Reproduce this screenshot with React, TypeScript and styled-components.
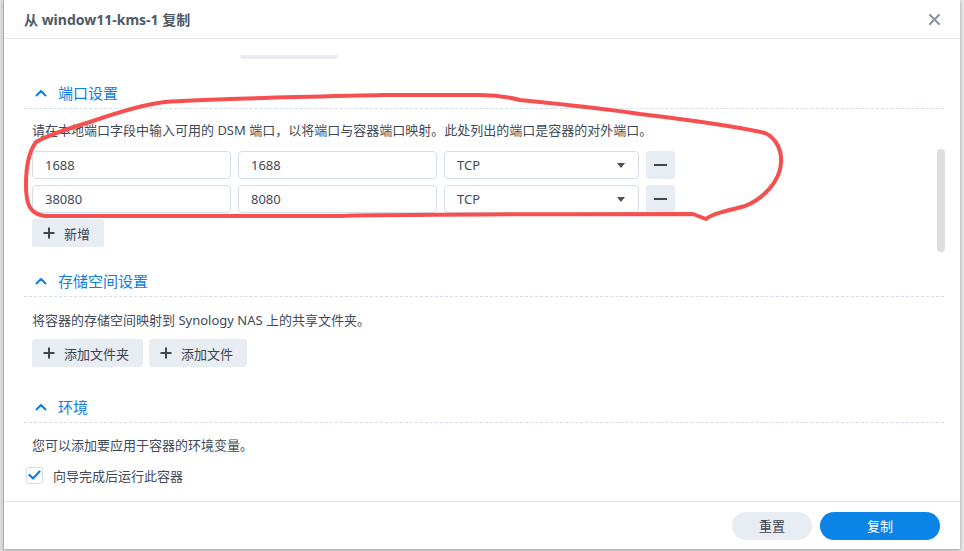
import React from "react";
import styled, { createGlobalStyle } from "styled-components";

const GlobalStyle = createGlobalStyle`
  html, body {
    margin: 0;
    padding: 0;
    height: 100%;
    overflow: hidden;
  }
  body {
    font-family: "Noto Sans", "Noto Sans CJK SC", sans-serif;
    font-size: 13px;
    color: #3e4856;
  }
`;

const Screen = styled.div`
  position: relative;
  width: 964px;
  height: 551px;
  display: flex;
  background: #e6e6e6;
`;

const Backdrop = styled.div`
  width: 4px;
  flex: none;
  background: #dcdcdc;
  border-right: 1px solid #c9c9c9;
  box-sizing: border-box;
`;

const Dialog = styled.div`
  width: 956px;
  height: 549px;
  display: flex;
  flex-direction: column;
  background: #fff;
  box-shadow: 0 1px 3px rgba(0, 0, 0, 0.35);
`;

const TitleBar = styled.div`
  height: 39px;
  box-sizing: border-box;
  border-bottom: 1px solid #e2e7ec;
  display: flex;
  align-items: center;
  justify-content: space-between;
  padding: 0 20px 0 20px;
  flex: none;
`;

const Title = styled.div`
  font-size: 14px;
  font-weight: 700;
  color: #4f5966;
`;

const Body = styled.div`
  position: relative;
  flex: 1;
  overflow: hidden;
  padding: 0 16px 0 20px;
`;

const Stub = styled.div`
  margin: 16px 0 0 216px;
  width: 98px;
  height: 4px;
  border-radius: 0 0 3px 3px;
  background: #e8edf3;
`;

const Section = styled.section<{ $top: number }>`
  margin-top: ${(p) => p.$top}px;
`;

const SectionHeader = styled.div`
  height: 32px;
  box-sizing: border-box;
  border-bottom: 1px dashed #d3dde8;
  display: flex;
  align-items: center;
  gap: 11px;
  padding-left: 11px;
  color: #0f7ee3;
  font-size: 15px;
`;

const SectionBody = styled.div`
  padding-left: 8px;
`;

const Desc = styled.div<{ $top: number }>`
  margin-top: ${(p) => p.$top}px;
  line-height: 20px;
  height: 20px;
  color: #3f4957;
`;

const PortRows = styled.div`
  margin-top: 11px;
  display: flex;
  flex-direction: column;
  gap: 6px;
`;

const PortRow = styled.div`
  display: grid;
  grid-template-columns: 199px 199px 195px 29px;
  gap: 7px;
`;

const Field = styled.input`
  height: 28px;
  box-sizing: border-box;
  border: 1px solid #d5dee7;
  border-radius: 4px;
  padding: 0 12px;
  font: inherit;
  font-size: 13px;
  color: #414b58;
  background: #fff;
  outline: none;
`;

const Select = styled.div`
  height: 28px;
  box-sizing: border-box;
  border: 1px solid #d5dee7;
  border-radius: 4px;
  padding: 0 12px;
  display: flex;
  align-items: center;
  justify-content: space-between;
  color: #414b58;
`;

const Caret = styled.span`
  width: 0;
  height: 0;
  border-left: 4px solid transparent;
  border-right: 4px solid transparent;
  border-top: 5px solid #4b515a;
  margin-right: 1px;
`;

const SquareButton = styled.button`
  height: 28px;
  border: none;
  border-radius: 3px;
  background: #e8edf4;
  display: flex;
  align-items: center;
  justify-content: center;
  padding: 0;
`;

const ButtonRow = styled.div<{ $top: number }>`
  margin-top: ${(p) => p.$top}px;
  display: flex;
  gap: 6px;
`;

const AddButton = styled.button`
  height: 28px;
  border: none;
  border-radius: 3px;
  background: #e8edf4;
  display: flex;
  align-items: center;
  gap: 9px;
  padding: 0 14px 0 11px;
  font: inherit;
  font-size: 13px;
  color: #3c4450;
`;

const CheckRow = styled.label`
  margin: 11px 0 0 -6px;
  display: flex;
  align-items: center;
  gap: 10px;
  height: 18px;
  color: #3f4957;
`;

const CheckBox = styled.span`
  width: 17px;
  height: 17px;
  box-sizing: border-box;
  border: 1px solid #d3dbe4;
  border-radius: 3px;
  display: flex;
  align-items: center;
  justify-content: center;
  background: #fff;
`;

const ScrollThumb = styled.div`
  position: absolute;
  right: 15px;
  top: 110px;
  width: 8px;
  height: 103px;
  border-radius: 4px;
  background: #dddddd;
`;

const Footer = styled.div`
  height: 48px;
  flex: none;
  box-sizing: border-box;
  border-top: 1px solid #e2e7ec;
  display: flex;
  align-items: center;
  justify-content: flex-end;
  gap: 8px;
  padding-right: 20px;
`;

const PillButton = styled.button<{ $primary?: boolean; $width: number }>`
  width: ${(p) => p.$width}px;
  height: 28px;
  border: none;
  border-radius: 14px;
  background: ${(p) => (p.$primary ? "#0b84e8" : "#e8edf4")};
  color: ${(p) => (p.$primary ? "#fff" : "#3c4450")};
  font: inherit;
  font-size: 13px;
`;

const Annotation = styled.svg`
  position: absolute;
  left: 0;
  top: 0;
  pointer-events: none;
`;

const Chevron = () => (
  <svg width="12" height="8" viewBox="0 0 12 8">
    <polyline points="1.5,6.5 6,2 10.5,6.5" fill="none" stroke="#0f7ee3" strokeWidth="2" strokeLinecap="round" strokeLinejoin="round" />
  </svg>
);

const Plus = () => (
  <svg width="12" height="12" viewBox="0 0 12 12">
    <path d="M6 0.5v11M0.5 6h11" stroke="#3f4650" strokeWidth="2" />
  </svg>
);

const Minus = () => (
  <svg width="13" height="4" viewBox="0 0 13 4">
    <path d="M0 2h13" stroke="#3f4650" strokeWidth="2" />
  </svg>
);

const Close = () => (
  <svg width="11" height="11" viewBox="0 0 11 11">
    <path d="M1 1l9 9M10 1l-9 9" stroke="#8a929c" strokeWidth="2" strokeLinecap="round" />
  </svg>
);

const Check = () => (
  <svg width="13" height="10" viewBox="0 0 13 10">
    <polyline points="1.5,5 5,8.5 11.5,1.5" fill="none" stroke="#0f7ee3" strokeWidth="2.2" strokeLinecap="round" strokeLinejoin="round" />
  </svg>
);

const ports = [
  { local: "1688", container: "1688", proto: "TCP" },
  { local: "38080", container: "8080", proto: "TCP" },
];

export default function App() {
  return (
    <>
      <GlobalStyle />
      <Screen>
        <Backdrop />
        <Dialog>
          <TitleBar>
            <Title>从 window11-kms-1 复制</Title>
            <Close />
          </TitleBar>
          <Body>
            <Stub />
            <Section $top={18}>
              <SectionHeader>
                <Chevron />
                端口设置
              </SectionHeader>
              <SectionBody>
                <Desc $top={11}>
                  请在本地端口字段中输入可用的 DSM 端口，以将端口与容器端口映射。此处列出的端口是容器的对外端口。
                </Desc>
                <PortRows>
                  {ports.map((p) => (
                    <PortRow key={p.local}>
                      <Field value={p.local} readOnly />
                      <Field value={p.container} readOnly />
                      <Select>
                        {p.proto}
                        <Caret />
                      </Select>
                      <SquareButton>
                        <Minus />
                      </SquareButton>
                    </PortRow>
                  ))}
                </PortRows>
                <ButtonRow $top={6}>
                  <AddButton>
                    <Plus />
                    新增
                  </AddButton>
                </ButtonRow>
              </SectionBody>
            </Section>
            <Section $top={18}>
              <SectionHeader>
                <Chevron />
                存储空间设置
              </SectionHeader>
              <SectionBody>
                <Desc $top={13}>将容器的存储空间映射到 Synology NAS 上的共享文件夹。</Desc>
                <ButtonRow $top={9}>
                  <AddButton>
                    <Plus />
                    添加文件夹
                  </AddButton>
                  <AddButton>
                    <Plus />
                    添加文件
                  </AddButton>
                </ButtonRow>
              </SectionBody>
            </Section>
            <Section $top={24}>
              <SectionHeader>
                <Chevron />
                环境
              </SectionHeader>
              <SectionBody>
                <Desc $top={12}>您可以添加要应用于容器的环境变量。</Desc>
                <CheckRow>
                  <CheckBox>
                    <Check />
                  </CheckBox>
                  向导完成后运行此容器
                </CheckRow>
              </SectionBody>
            </Section>
            <ScrollThumb />
          </Body>
          <Footer>
            <PillButton $width={80}>重置</PillButton>
            <PillButton $width={120} $primary>
              复制
            </PillButton>
          </Footer>
        </Dialog>
        <Annotation width="964" height="551" viewBox="0 0 964 551">
          <path
            d="M 36 142 C 30 150, 26 165, 26 185 C 26 205, 30 214, 45 216 L 340 216 C 450 214, 600 214, 693 214 L 706 219 C 712 214, 725 211, 745 206 C 765 198, 780 180, 781 163 C 782 150, 776 138, 765 133 C 730 125, 690 120, 640 114 C 600 108, 560 104, 520 100 C 505 96, 495 95, 480 95 L 383 95 C 300 97, 200 99, 165 102 C 140 105, 110 115, 90 122 C 70 128, 50 134, 36 142"
            fill="none"
            stroke="#f64f4f"
            strokeWidth="4"
            strokeLinecap="round"
            strokeLinejoin="round"
          />
        </Annotation>
      </Screen>
    </>
  );
}
